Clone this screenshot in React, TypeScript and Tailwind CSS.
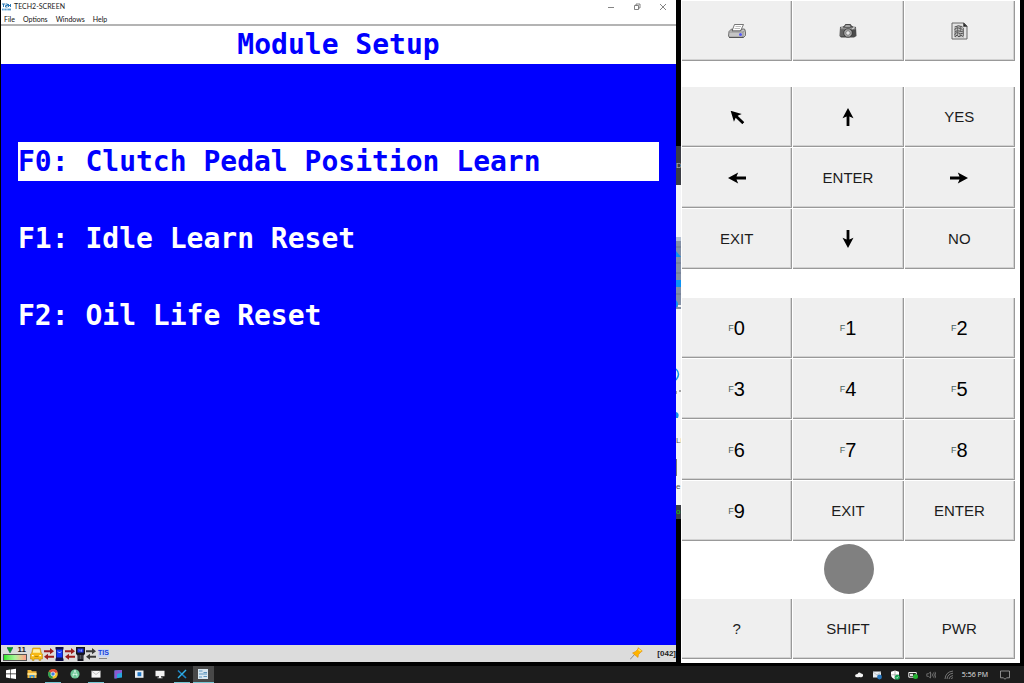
import { useState } from "react";
import type { ReactNode } from "react";
import clsx from "clsx";

type MenuEntry = { key: string; label: string };

const MENU_BAR = ["File", "Options", "Windows", "Help"];

const ENTRIES: MenuEntry[] = [
  { key: "F0", label: "Clutch Pedal Position Learn" },
  { key: "F1", label: "Idle Learn Reset" },
  { key: "F2", label: "Oil Life Reset" },
];

export default function App() {
  return (
    <div className="flex min-h-screen flex-col bg-black font-['Open_Sans',sans-serif]">
      <main className="grid flex-1 grid-cols-[minmax(0,676fr)_5px_minmax(0,343fr)] pb-[3px]">
        <TechWindow />
        <BackgroundSliver />
        <Keypad />
      </main>
      <Taskbar />
    </div>
  );
}

/* ---------- scan tool window ---------- */

function TechWindow() {
  const [selected, setSelected] = useState("F0");

  return (
    <section className="mb-px ml-px flex flex-col bg-white">
      <header className="flex h-[13px] items-center justify-between pl-px pr-[9px] font-['Lato',sans-serif] text-[7px] text-[#222]">
        <div className="flex items-center gap-[3px]">
          <AppIcon />
          <span>TECH2-SCREEN</span>
        </div>
        <div className="flex items-center gap-[18px]">
          <WindowButton label="Minimize">
            <path d="M1 4.5h6" />
          </WindowButton>
          <WindowButton label="Restore">
            <path d="M1.5 2.5h4v4h-4zM3 2.5V1h4v4H5.5" />
          </WindowButton>
          <WindowButton label="Close">
            <path d="M1 1l6 6M7 1L1 7" />
          </WindowButton>
        </div>
      </header>

      <nav className="flex h-[13px] items-center gap-2 border-b-2 border-[#b4b4b4] pl-[3px] font-['Lato',sans-serif] text-[7px] leading-[10px] text-[#111]">
        {MENU_BAR.map((m) => (
          <button key={m} type="button">
            {m}
          </button>
        ))}
      </nav>

      <h1 className="flex h-[38px] items-center justify-center font-['DejaVu_Sans_Mono',monospace] text-[28px] font-bold leading-[38px] text-[#0000ff]">
        Module Setup
      </h1>

      <ul className="flex flex-1 flex-col gap-[38px] bg-[#0000ff] px-[17px] pt-[78px]">
        {ENTRIES.map((e) => (
          <li key={e.key}>
            <button
              type="button"
              onClick={() => setSelected(e.key)}
              className={clsx(
                "block h-[39px] w-full whitespace-nowrap text-left font-['DejaVu_Sans_Mono',monospace] text-[28px] font-bold leading-[39px]",
                selected === e.key
                  ? "bg-white text-[#0000ff]"
                  : "bg-[#0000ff] text-white",
              )}
            >
              {e.key}: {e.label}
            </button>
          </li>
        ))}
      </ul>

      <StatusBar />
    </section>
  );
}

function WindowButton({ label, children }: { label: string; children: ReactNode }) {
  return (
    <button type="button" aria-label={label}>
      <svg viewBox="0 0 8 8" className="h-2 w-2" fill="none" stroke="#666" strokeWidth="0.8">
        {children}
      </svg>
    </button>
  );
}

function AppIcon() {
  return (
    <svg viewBox="0 0 9 8" className="h-2 w-[9px]" fill="none" stroke="#2b78b5" strokeWidth="1">
      <path d="M0 1h3M1.5 1v3M3.5 1h2v1.500h-2V4h2M6.500 1v3M8.500 1v3M6.500 2.500h2" />
      <path d="M0 6.5h9" stroke="#5c9fd0" strokeWidth="1.8" />
      <path d="M2 5v3M5 5v3" stroke="#fff" strokeWidth="0.6" />
    </svg>
  );
}

function StatusBar() {
  return (
    <footer className="flex h-[17px] items-center justify-between bg-[#dcdcdc] pl-[2px] font-['Liberation_Sans',sans-serif] text-[8px] font-bold leading-[8px] text-[#222]">
      <div className="flex items-center gap-px">
        <div className="flex w-6 flex-col">
          <div className="flex items-center justify-between pl-1 pr-px">
            <svg viewBox="0 0 6 7" className="h-[7px] w-[6px]">
              <path d="M0 .5h6L3 6z" fill="#0b9a20" stroke="#064" strokeWidth=".5" />
            </svg>
            <span>11</span>
          </div>
          <div className="h-[7px] border border-[#555] bg-linear-to-r from-[#20e820] via-[#a8f59a] via-50% to-[#ff9c8a]" />
        </div>
        <svg viewBox="0 0 14 14" className="ml-[2px] h-[14px] w-[13px]" preserveAspectRatio="none">
          <path d="M3 1h8l1.2 5 1.3 1v5h-2v1.6H9.7V12H4.3v1.6H2.5V12h-2V7l1.3-1z" fill="#f6b916" stroke="#a8780a" strokeWidth=".5" />
          <path d="M3.7 2.2h6.6l.8 3.5H2.9z" fill="#fff1a8" />
          <path d="M2 8h2v1.3H2zM10 8h2v1.3h-2z" fill="#fffbe0" />
          <path d="M5 9.5h4" stroke="#9b6b00" strokeWidth=".7" />
        </svg>
        <BusArrows color="#9c1c1c" />
        <svg viewBox="0 0 9 14" className="h-[14px] w-[9px]">
          <path d="M.5 0h8v2L8 3v8l.5 1v2h-8v-2L1 11V3L.5 2z" fill="#101048" />
          <path d="M1.5 2.5h6v8h-6z" fill="#1438ff" />
          <path d="M3 4.5l1.5 1.5L6 4.5" stroke="#fff" strokeWidth=".8" fill="none" />
        </svg>
        <BusArrows color="#9c1c1c" />
        <svg viewBox="0 0 9 14" className="h-[14px] w-[9px]">
          <path d="M0 0h9v7L7.5 8.500V14h-6V8.500L0 7z" fill="#15151f" />
          <path d="M1.500 1.500h6v4h-6z" fill="#2237e8" />
          <path d="M3 2.500l2 2M5.500 2.500v2" stroke="#cdd6ff" strokeWidth=".6" />
          <path d="M2.500 9h1M4 9h1M5.500 9h1M2.500 11h1M4 11h1M5.500 11h1" stroke="#999" />
        </svg>
        <BusArrows color="#3a3a3a" />
        <div className="ml-px flex flex-col items-center text-[7px] text-[#173fe0]">
          <span className="bg-[#c5d4f2]">TIS</span>
          <span className="mt-px h-px w-2 bg-[#888]" />
        </div>
      </div>
      <div className="flex items-center gap-[14px]">
        <svg viewBox="0 0 13 13" className="h-[13px] w-[13px]">
          <path d="M0 12.500L5 7" stroke="#8a8a8a" strokeWidth="1" />
          <path d="M2.500 6l3-1.500L8 2V.700L12.300 4 11 5 8.500 7.500 8 10.500z" fill="#ffb400" stroke="#dc8600" strokeWidth=".5" />
          <path d="M8.500 1.500l3 2.300-1.500.7-2-1.500z" fill="#ffe95e" />
        </svg>
        <span>[042]</span>
      </div>
    </footer>
  );
}

function BusArrows({ color }: { color: string }) {
  return (
    <svg viewBox="0 0 10 12" className="h-3 w-[10px]" fill={color}>
      <path d="M0 2.300h6V0L10 3.200 6 6.200V4.200H0zM10 7.800H4V5.700L0 8.800l4 3V9.700h6z" />
    </svg>
  );
}

/* Edge of the desktop that shows between the two windows. */
function BackgroundSliver() {
  return (
    <div
      aria-hidden="true"
      className="flex w-[5px] flex-col overflow-hidden font-['Liberation_Sans',sans-serif] text-[8px] leading-[10px] text-[#555]"
    >
      <div className="h-[146px] bg-black" />
      <div className="flex h-[39px] items-center bg-[#3b3d45] text-[#bbb]">D</div>
      <div className="h-[52px] bg-[#f4f4f6]" />
      <svg viewBox="0 0 5 72" className="h-[72px] w-[5px]">
        <path d="M0 0h5v72H0z" fill="#8490a6" />
        <path d="M0 0h5v4H0z" fill="#b4c0d2" />
        <path d="M0 10h5M0 26h5M0 36h5M0 57h5" stroke="#6c788e" />
        <path d="M0 14l5 6H0zM0 43h5v7H0zM0 63q4 4 0 8z" fill="#0c93f5" />
        <path d="M2 68h3v2H2z" fill="#eee" />
      </svg>
      <div className="flex h-[196px] flex-col bg-[#f4f4f6]">
        <svg viewBox="0 0 5 127" className="h-[127px] w-[5px]" fill="none">
          <path d="M0 60q5 5 0 11" stroke="#1499ec" strokeWidth="1.500" />
          <path d="M0 82v3M3 82h2" stroke="#555" />
          <path d="M0 103q4 1 2 6H0z" fill="#1591ee" />
        </svg>
        <span>Li</span>
        <span className="mt-[13px] h-[17px] w-px bg-[#777]" />
        <span className="mt-[6px]">e</span>
      </div>
      <div className="flex h-[14px] items-center bg-[#3b3d45] text-[#19c619]">o</div>
    </div>
  );
}

/* ---------- keypad ---------- */

function Keypad() {
  return (
    <section className="mr-1 bg-white pb-1 pl-px pr-[5px] pt-px font-['Liberation_Sans',sans-serif]">
      <div className="grid grid-cols-3 gap-px">
        <Key label="Print">
          <PrinterIcon />
        </Key>
        <Key label="Screenshot">
          <CameraIcon />
        </Key>
        <Key label="Log">
          <PageIcon />
        </Key>
      </div>

      <div className="mt-[26px] grid grid-cols-3 gap-px">
        <Key label="Back">
          <ArrowIcon className="-rotate-45" />
        </Key>
        <Key label="Up">
          <ArrowIcon />
        </Key>
        <Key>YES</Key>
        <Key label="Left">
          <ArrowIcon className="-rotate-90" />
        </Key>
        <Key>ENTER</Key>
        <Key label="Right">
          <ArrowIcon className="rotate-90" />
        </Key>
        <Key>EXIT</Key>
        <Key label="Down">
          <ArrowIcon className="rotate-180" />
        </Key>
        <Key>NO</Key>
      </div>

      <div className="mt-[29px] grid grid-cols-3 gap-px">
        {[0, 1, 2, 3, 4, 5, 6, 7, 8, 9].map((n) => (
          <Key key={n}>
            <span className="flex items-center text-[20px] leading-6 text-black">
              <span className="text-[9px] text-[#48605c]">F</span>
              {n}
            </span>
          </Key>
        ))}
        <Key>EXIT</Key>
        <Key>ENTER</Key>
      </div>

      <div className="mx-auto mb-[5px] mt-[3px] h-[50px] w-[50px] rounded-full bg-[#808080]" />

      <div className="grid grid-cols-3 gap-px">
        <Key>?</Key>
        <Key>SHIFT</Key>
        <Key>PWR</Key>
      </div>
    </section>
  );
}

function Key({ label, children }: { label?: string; children: ReactNode }) {
  return (
    <button
      type="button"
      aria-label={label}
      className="flex h-[60px] items-center justify-center border-b border-r border-[#999] bg-[#efefef] text-[15px] leading-5 text-[#1c1c1c] shadow-[inset_-1px_-1px_0_#d2d2d2]"
    >
      {children}
    </button>
  );
}

function ArrowIcon({ className }: { className?: string }) {
  return (
    <svg viewBox="0 0 18 18" className={clsx("h-[18px] w-[18px]", className)}>
      <path d="M9 0l5.500 10.200L10.400 8.500V18H7.600V8.500L3.500 10.200z" fill="#000" />
    </svg>
  );
}

function PrinterIcon() {
  return (
    <svg viewBox="0 0 18 16" className="h-4 w-[18px]" stroke="#555" strokeWidth=".8" strokeLinejoin="round">
      <path d="M6.500 1.500h9L12.500 8H4z" fill="#fff" />
      <path d="M7.500 3.500h5.500M6.500 5.500h5.500" stroke="#aaa" />
      <path d="M1 8.500L3.500 6h1L4 8h8.500L14 6h2.500l1 2.500v4l-2 2H1.500L.5 13z" fill="#c5c5c5" />
      <path d="M1 9h14l2.300-1.500M15 9v5" fill="none" stroke="#888" />
      <path d="M1 14.300h14.500" stroke="#444" />
      <circle cx="12.500" cy="11.500" r="1.500" fill="#5558f5" stroke="none" />
    </svg>
  );
}

function CameraIcon() {
  return (
    <svg viewBox="0 0 18 16" className="h-4 w-[18px]">
      <path d="M1 4l4-1 1.500-2h5L13 3l4 1 .5 9-2.500 1.500H2L.5 13z" fill="#4b4b4b" />
      <path d="M1.500 4.500h15v2h-15z" fill="#929292" />
      <path d="M6.500 2h4.500l1 2H5.500z" fill="#ccc" stroke="#444" strokeWidth=".6" />
      <path d="M2 4h2M14 4h2" stroke="#ddd" />
      <path d="M2 7v6M4 7v6" stroke="#8a8a8a" strokeWidth=".8" />
      <circle cx="9" cy="10" r="4.200" fill="#b7b7b7" stroke="#2b2b2b" strokeWidth=".8" />
      <circle cx="9" cy="10" r="2.300" fill="#e6e6e6" stroke="#666" strokeWidth=".8" />
      <path d="M13 6l2-1" stroke="#ddd" />
    </svg>
  );
}

function PageIcon() {
  return (
    <svg viewBox="0 0 17 18" className="h-[18px] w-[17px]" fill="none" stroke="#444">
      <path d="M1 1h12l3 3v13H1z" fill="#e4e4e4" stroke="#666" />
      <path d="M12.500 1v3.500H16z" fill="#222" strokeWidth=".6" />
      <path d="M4 5.500l2.500-2h4L13 6v8l-1.500 1.500H4L3 14z" fill="#bdbdbd" stroke="none" />
      <path d="M3.500 5q4-2.500 8 0M3.500 7.500q1.500-2 4-1.500t4 1.500M4 10q2-2 4-1t4.500 0M3.500 12.500q2.500-3 4-1.500t5 0M4 15l2-2 2 2 2-2 2.500 2" strokeWidth=".9" />
      <path d="M4 6v9M6.500 5v9M9.500 5v5M12.500 6v8M9 12v3" stroke="#666" strokeWidth=".8" />
    </svg>
  );
}

/* ---------- taskbar ---------- */

const APPS: { name: string; running?: boolean; active?: boolean; icon: ReactNode }[] = [
  {
    name: "Start",
    icon: <path d="M1 2.200l4-.6v4H1zM5.600 1.500L11 .8v4.800H5.600zM1 6.200h4v4l-4-.6zM5.600 6.200H11V11l-5.400-.8z" fill="#fff" />,
  },
  {
    name: "File Explorer",
    icon: (
      <>
        <path d="M1.500 2h3.500l1 1.200h4.500V10h-9z" fill="#f0b53a" />
        <path d="M1.500 5h9v2h-9z" fill="#ffe38d" />
        <path d="M3.500 7h5v3H7V8.500H5V10H3.500z" fill="#3c97d8" />
      </>
    ),
  },
  {
    name: "Chrome",
    running: true,
    icon: (
      <>
        <circle cx="6" cy="6" r="4.800" fill="#efc32d" />
        <path d="M6 6L1.800 3.600A4.800 4.800 0 0 1 10.600 4z" fill="#df4a38" />
        <path d="M6 6L1.800 3.600A4.800 4.800 0 0 0 5.500 10.800z" fill="#26a058" />
        <circle cx="6" cy="6" r="2.100" fill="#3c7fe8" stroke="#fff" strokeWidth=".7" />
      </>
    ),
  },
  {
    name: "Android Studio",
    icon: (
      <>
        <circle cx="6" cy="6" r="4.600" fill="#6cc797" />
        <path d="M6 1.800l2.200 7M6 1.800l-2.200 7M3.500 6.500h5" stroke="#d5f3e3" strokeWidth=".8" fill="none" />
      </>
    ),
  },
  {
    name: "Mail",
    running: true,
    icon: (
      <>
        <path d="M1.500 2.800h9v6.800h-9z" fill="#f6f6f6" />
        <path d="M1.500 3L6 6.500 10.500 3" stroke="#aaa" strokeWidth=".7" fill="none" />
      </>
    ),
  },
  {
    name: "Studio",
    icon: (
      <>
        <path d="M2.500 2.500L10 2v7.500l-7.500 1z" fill="#28a5dc" />
        <path d="M2.500 2.500L10 2v2.500L5 6v4.200l-2.500.3z" fill="#8c58d0" />
      </>
    ),
  },
  {
    name: "Remote Desktop",
    icon: (
      <>
        <path d="M2 2.500h8.500v7.300H2z" fill="#e9eef2" />
        <path d="M4.500 4.200h3.800v4H4.500z" fill="#2178c8" />
      </>
    ),
  },
  {
    name: "Display",
    icon: <path d="M1.500 2.800h9v5.500H7v1.200h1.500v.8h-5v-.8H5V8.300H1.500z" fill="#f2f2f2" />,
  },
  {
    name: "Tools",
    running: true,
    icon: (
      <>
        <path d="M2 2.500l8 7.500" stroke="#1d86c8" strokeWidth="1.700" />
        <path d="M10 2L2 10" stroke="#31b3ea" strokeWidth="1.500" />
      </>
    ),
  },
  {
    name: "Tech2",
    running: true,
    active: true,
    icon: (
      <>
        <path d="M1 1h10v10H1z" fill="#d9e7f0" />
        <path d="M2 3h3.500M6.500 4.500H10M2 6h8M2 9h3M6.500 8.500H10" stroke="#5d95bd" strokeWidth="1" />
      </>
    ),
  },
];

function Taskbar() {
  return (
    <footer className="flex h-[17px] items-stretch justify-between bg-[#1c1c1c] pr-[14px]">
      <nav className="grid w-[214px] grid-cols-10">
        {APPS.map((a) => (
          <button
            key={a.name}
            type="button"
            aria-label={a.name}
            className={clsx("flex flex-col items-center justify-between", a.active && "bg-[#484848]")}
          >
            <svg viewBox="0 0 12 12" className="mt-[2px] h-3 w-3">
              {a.icon}
            </svg>
            <span
              className={clsx(
                "h-px",
                a.active ? "w-full" : "w-4",
                a.running && "bg-[#76c7d4]",
              )}
            />
          </button>
        ))}
      </nav>
      <div className="flex items-center gap-2">
        <TrayIcon>
          <path d="M1 6q0-2 2.500-2Q5 1.500 7 3.500q2.500 0 2 2.500Q8 8 5.500 7 2 8 1 6z" fill="#f4f4f4" />
        </TrayIcon>
        <TrayIcon>
          <path d="M1 1.500h8v6H1z" fill="#e6ecf2" />
          <path d="M1 2l4 3 4-3" stroke="#999" strokeWidth=".5" fill="none" />
          <circle cx="7.500" cy="7" r="2.400" fill="#2676bd" />
        </TrayIcon>
        <TrayIcon>
          <path d="M5 .5l4 1.300v3Q9 8 5 9.500 1 8 1 4.800v-3z" fill="#fff" />
          <path d="M5 1v8M1.300 4.800H9" stroke="#888" strokeWidth=".6" />
          <circle cx="7.300" cy="7.300" r="2.500" fill="#18a554" />
          <path d="M6 7.300l1 1 1.500-2" stroke="#fff" strokeWidth=".6" fill="none" />
        </TrayIcon>
        <TrayIcon>
          <path d="M.8 2.500h7.500v4.700H.8z" fill="none" stroke="#eee" strokeWidth="1" />
          <path d="M2 3.800h3v2.200H2z" fill="#ddd" />
          <circle cx="7.500" cy="6.500" r="2.500" fill="#24b333" />
        </TrayIcon>
        <TrayIcon>
          <path d="M.8 3.800h1.500L4.500 2v6L2.300 6.300H.8zM6 3.500q1 1.500 0 3M7.500 2.500q1.800 2.500 0 5M9 1.800q2 3.200 0 6.400" fill="none" stroke="#8c8c8c" strokeWidth=".7" />
        </TrayIcon>
        <TrayIcon>
          <path d="M1 9Q1.500 2 9 1M3 9Q3.500 4 9 3.200M5 9Q5.500 6 9 5.500M7 9q.3-1 2-1.300" fill="none" stroke="#8c8c8c" strokeWidth=".8" />
        </TrayIcon>
        <time className="whitespace-nowrap text-[7px] leading-[10px] text-[#e4e4e4]">5:56 PM</time>
        <button type="button" aria-label="Notifications" className="ml-1">
          <TrayIcon>
            <path d="M.5 1h9v6.800H6.500L5 9.300 3.500 7.800h-3z" fill="none" stroke="#a8a8a8" strokeWidth=".8" />
          </TrayIcon>
        </button>
      </div>
    </footer>
  );
}

function TrayIcon({ children }: { children: ReactNode }) {
  return (
    <svg viewBox="0 0 10 10" className="h-[10px] w-[10px]">
      {children}
    </svg>
  );
}
